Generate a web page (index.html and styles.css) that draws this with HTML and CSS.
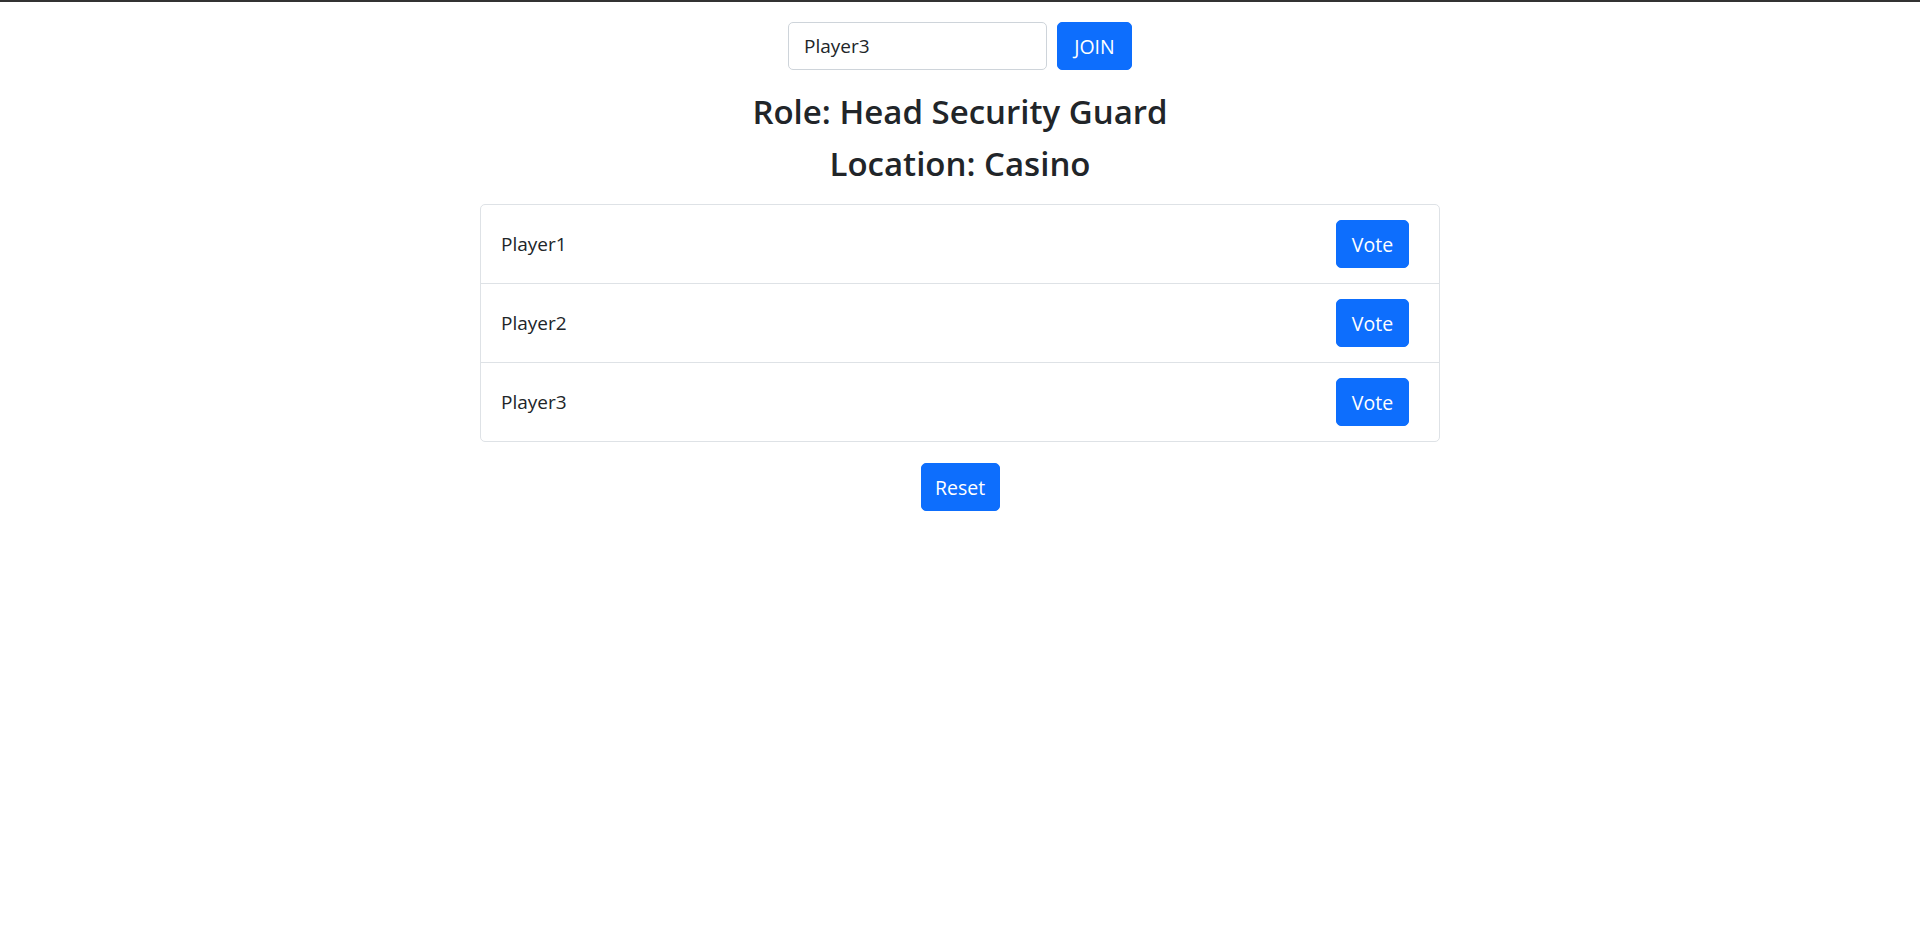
FILE: index.html
```html
<!DOCTYPE html>
<html lang="en">
<head>
<meta charset="utf-8">
<title>Spyfall</title>
<link rel="stylesheet" href="styles.css">
</head>
<body>
<div class="app">
  <div class="join-row">
    <input class="name-input" type="text" value="Player3">
    <button class="btn btn-join">JOIN</button>
  </div>
  <div class="info">
    <h3 class="heading">Role: Head Security Guard</h3>
    <h3 class="heading">Location: Casino</h3>
  </div>
  <ul class="player-list">
    <li class="player-item"><span class="player-name">Player1</span><button class="btn btn-vote">Vote</button></li>
    <li class="player-item"><span class="player-name">Player2</span><button class="btn btn-vote">Vote</button></li>
    <li class="player-item"><span class="player-name">Player3</span><button class="btn btn-vote">Vote</button></li>
  </ul>
  <div class="reset-row">
    <button class="btn btn-reset">Reset</button>
  </div>
</div>
</body>
</html>
```

FILE: styles.css
```css
* { box-sizing: border-box; }

html, body {
  margin: 0;
  padding: 0;
  background: #fff;
}

body {
  border-top: 2px solid #333;
  font-family: "Open Sans", "Noto Sans", sans-serif;
  font-size: 19px;
  line-height: 1.5;
  color: #212529;
}

.app {
  display: flex;
  flex-direction: column;
  align-items: center;
  padding-top: 20px;
}

.join-row {
  display: flex;
  gap: 10px;
  margin-bottom: 21px;
}

.name-input {
  width: 259px;
  height: 48px;
  padding: 0 15px;
  font-family: inherit;
  font-size: 19px;
  color: #212529;
  border: 1px solid #ced4da;
  border-radius: 5px;
  outline: none;
}

.btn {
  height: 48px;
  padding: 0;
  font-family: inherit;
  font-size: 19.5px;
  color: #fff;
  background: #0d6efd;
  border: 1px solid #0d6efd;
  border-radius: 5px;
  cursor: pointer;
}

.btn-join { width: 75px; }
.btn-vote { width: 73px; }
.btn-reset { width: 79px; }

.info {
  display: flex;
  flex-direction: column;
  align-items: center;
  margin-bottom: 9px;
}

.heading {
  margin: 0 0 10px;
  font-size: 33px;
  font-weight: 600;
  line-height: 42px;
}

.player-list {
  width: 960px;
  margin: 0;
  padding: 0;
  list-style: none;
  border: 1px solid #dee2e6;
  border-radius: 5px;
}

.player-item {
  display: flex;
  align-items: center;
  justify-content: space-between;
  padding: 15px 30px 15px 20px;
}

.player-item + .player-item {
  border-top: 1px solid #dee2e6;
}

.reset-row {
  margin-top: 21px;
}
```
